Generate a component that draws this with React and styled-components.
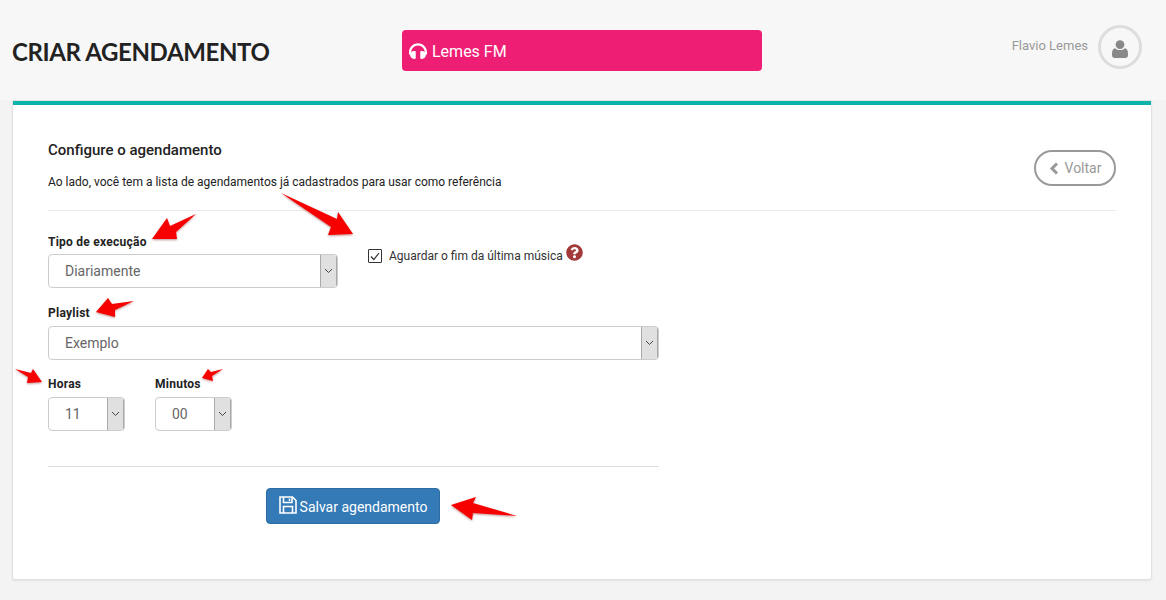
import React from "react";
import styled, { createGlobalStyle } from "styled-components";
import { FaHeadphones, FaQuestionCircle } from "react-icons/fa";

const arrows = [
  "152,239 167,218 170,226 196,214 176,232 177,239",
  "281,193 337,219 338,212 353,234 328,235 331,227",
  "96,312 108,298 112,304 134,301 115,310 115,317",
  "15,369 31,373 33,369 42,382 27,383 28,377",
  "223,369 211,372 208,369 202,378 213,381 212,376",
  "451,505 476,497 473,503 517,516 473,513 472,520",
];

function Select({ width, value }) {
  return (
    <SelectBox $width={width}>
      <SelectValue>{value}</SelectValue>
      <SelectArrow>
        <svg width="9" height="6" viewBox="0 0 9 6">
          <path d="M1 1l3.5 3.5L8 1" fill="none" stroke="#444" strokeWidth="1" />
        </svg>
      </SelectArrow>
    </SelectBox>
  );
}

export default function App() {
  return (
    <Page>
      <GlobalStyle />
      <Header>
        <Title>CRIAR AGENDAMENTO</Title>
        <Station>
          <FaHeadphones size={18} />
          <span>Lemes FM</span>
        </Station>
        <UserArea>
          <UserName>Flavio Lemes</UserName>
          <Avatar>
            <svg width="16" height="18" viewBox="0 0 16 18" fill="#888">
              <circle cx="8" cy="4.6" r="4.4" />
              <path d="M3 8.2c1.3 1.2 3 1.9 5 1.9s3.700-.7 5-1.900c1.900.4 3 2.300 3 5.300v1.700c0 1.600-1.200 2.800-2.800 2.800H2.800C1.200 18 0 16.800 0 15.200v-1.700c0-3 1.100-4.900 3-5.300z" />
            </svg>
          </Avatar>
        </UserArea>
      </Header>
      <Card>
        <TopBar />
        <CardBody>
          <CardHead>
            <div>
              <CardTitle>Configure o agendamento</CardTitle>
              <CardText>
                Ao lado, você tem a lista de agendamentos já cadastrados para
                usar como referência
              </CardText>
            </div>
            <BackButton>
              <svg width="10" height="13" viewBox="0 0 10 13">
                <path d="M8 1.500L3 6.500l5 5" fill="none" stroke="#999" strokeWidth="3" />
              </svg>
              Voltar
            </BackButton>
          </CardHead>
          <Divider />
          <Form>
            <TopRow>
              <Field $gap="4px">
                <Label>Tipo de execução</Label>
                <Select width="290px" value="Diariamente" />
              </Field>
              <CheckRow>
                <CheckBox>
                  <svg width="10" height="9" viewBox="0 0 10 9">
                    <path d="M1 4.500l2.800 3L9 1" fill="none" stroke="#333" strokeWidth="1.200" />
                  </svg>
                </CheckBox>
                <CheckLabel>Aguardar o fim da última música</CheckLabel>
                <HelpIcon>
                  <FaQuestionCircle size={17} />
                </HelpIcon>
              </CheckRow>
            </TopRow>
            <Field>
              <Label>Playlist</Label>
              <Select width="100%" value="Exemplo" />
            </Field>
            <TimeRow>
              <Field>
                <Label>Horas</Label>
                <Select width="77px" value="11" />
              </Field>
              <Field>
                <Label>Minutos</Label>
                <Select width="77px" value="00" />
              </Field>
            </TimeRow>
            <FormDivider />
            <SaveButton>
              <svg width="18" height="18" viewBox="0 0 18 18" fill="none" stroke="#fff" strokeWidth="1.600">
                <path d="M1 1h12.500L17 4.500V17H1z" />
                <path d="M4.500 1v5.500h8.500V1M4.500 17v-6.500h9V17" />
                <path d="M10.500 2.500v2.500" />
              </svg>
              <span>Salvar agendamento</span>
            </SaveButton>
          </Form>
        </CardBody>
      </Card>
      <Arrows viewBox="0 0 1166 600">
        {arrows.map((points) => (
          <polygon key={points} points={points} fill="#f60000" />
        ))}
      </Arrows>
    </Page>
  );
}

const GlobalStyle = createGlobalStyle`
  html, body {
    margin: 0;
    height: 100%;
    overflow: hidden;
    background: #f3f3f3;
  }
  * {
    box-sizing: border-box;
  }
`;

const Page = styled.div`
  position: relative;
  width: 1166px;
  height: 600px;
  font-family: Roboto, sans-serif;
`;

const Header = styled.header`
  height: 100px;
  background: #f7f7f7;
  padding: 0 24px 0 12px;
  display: flex;
  align-items: center;
`;

const Title = styled.h1`
  width: 390px;
  margin: 2px 0 0;
  font-family: Lato, sans-serif;
  font-size: 24px;
  font-weight: 700;
  letter-spacing: -0.38px;
  color: #222;
`;

const Station = styled.div`
  width: 360px;
  height: 41px;
  margin-top: 1px;
  padding-left: 7px;
  display: flex;
  align-items: center;
  gap: 5px;
  background: #ee1e75;
  border-radius: 4px;
  color: #fff;
  font-size: 16px;

  span {
    margin-top: 2px;
  }
`;

const UserArea = styled.div`
  margin-left: auto;
  display: flex;
  align-items: center;
  gap: 10px;
  margin-top: -6px;
`;

const UserName = styled.span`
  font-size: 13px;
  color: #999;
  margin-top: -3px;
`;

const Avatar = styled.div`
  width: 44px;
  height: 44px;
  padding-top: 3px;
  border-radius: 50%;
  border: 3px solid #ddd;
  display: flex;
  align-items: center;
  justify-content: center;
`;

const Card = styled.main`
  width: 1140px;
  height: 480px;
  margin-left: 12px;
  background: #fff;
  border: 1px solid #e2e2e2;
  border-radius: 0 0 3px 3px;
  box-shadow: 0 1px 2px rgba(0, 0, 0, 0.08);
`;

const TopBar = styled.div`
  height: 4px;
  background: #0cb4ad;
`;

const CardBody = styled.div`
  padding: 0 35px;
`;

const CardHead = styled.div`
  height: 105px;
  padding-top: 35px;
  display: flex;
  justify-content: space-between;
  align-items: flex-start;
`;

const CardTitle = styled.h2`
  margin: 0 0 14px;
  font-size: 15px;
  line-height: 20px;
  font-weight: 500;
  color: #222;
`;

const CardText = styled.p`
  margin: 0;
  font-size: 12px;
  line-height: 16px;
  color: #222;
`;

const BackButton = styled.button`
  width: 82px;
  height: 36px;
  margin-top: 10px;
  display: flex;
  align-items: center;
  justify-content: center;
  gap: 6px;
  background: #fff;
  border: 2px solid #999;
  border-radius: 18px;
  color: #999;
  font-family: inherit;
  font-size: 14px;
`;

const Divider = styled.hr`
  margin: 0;
  border: 0;
  border-top: 1px solid #eaeaea;
`;

const Form = styled.div`
  width: 611px;
  padding-top: 23px;
  display: flex;
  flex-direction: column;
  gap: 16px;
`;

const TopRow = styled.div`
  display: flex;
  gap: 30px;
  margin-bottom: 1px;
`;

const Field = styled.div`
  display: flex;
  flex-direction: column;
  gap: ${(p) => p.$gap || "5px"};
`;

const Label = styled.label`
  font-size: 12px;
  line-height: 16px;
  font-weight: 700;
  letter-spacing: 0.25px;
  color: #222;
`;

const SelectBox = styled.div`
  width: ${(p) => p.$width};
  height: 34px;
  display: flex;
  background: #fff;
  border: 1px solid #ccc;
  border-radius: 4px;
  overflow: hidden;
`;

const SelectValue = styled.span`
  flex: 1;
  padding-left: 16px;
  font-size: 14px;
  line-height: 32px;
  color: #666;
`;

const SelectArrow = styled.span`
  width: 17px;
  display: flex;
  align-items: center;
  justify-content: center;
  background: #e0e0e0;
  border-left: 1px solid #aaa;
  border-right: 1px solid #aaa;
`;

const CheckRow = styled.div`
  height: 32px;
  margin-top: 4px;
  display: flex;
  align-items: center;
`;

const CheckBox = styled.span`
  width: 14px;
  height: 14px;
  margin-right: 7px;
  margin-top: 4px;
  display: flex;
  align-items: center;
  justify-content: center;
  border: 1px solid #333;
  border-radius: 1px;
`;

const CheckLabel = styled.span`
  font-size: 12px;
  color: #333;
  margin-top: 3px;
`;

const HelpIcon = styled.span`
  margin-left: 3px;
  margin-bottom: 3px;
  display: flex;
  color: #a33a3a;
`;

const TimeRow = styled.div`
  display: flex;
  gap: 30px;
`;

const FormDivider = styled.hr`
  width: 100%;
  margin: 19px 0 5px;
  border: 0;
  border-top: 1px solid #ddd;
`;

const SaveButton = styled.button`
  width: 174px;
  height: 36px;
  margin-right: 1px;
  align-self: center;
  display: flex;
  align-items: center;
  justify-content: center;
  gap: 3px;
  background: #337ab7;
  border: 1px solid #2e6da4;
  border-radius: 4px;
  color: #fff;
  font-family: inherit;
  font-size: 14px;

  svg {
    margin-top: -2px;
  }

  span {
    margin-top: 1px;
  }
`;

const Arrows = styled.svg`
  position: absolute;
  inset: 0;
  width: 1166px;
  height: 600px;
  pointer-events: none;
  filter: drop-shadow(0 1px 1px rgba(120, 0, 0, 0.45));
`;
